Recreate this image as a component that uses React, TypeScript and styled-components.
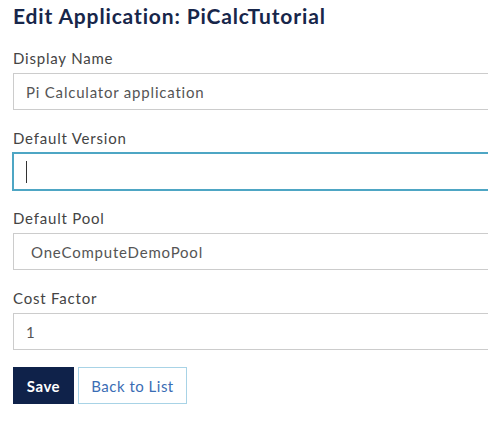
import React from 'react'
import styled, { createGlobalStyle, css } from 'styled-components'

const GlobalStyle = createGlobalStyle`
  html, body {
    margin: 0;
    padding: 0;
    background: #ffffff;
    overflow: hidden;
  }
  body {
    font-family: Lato, "Open Sans", "Liberation Sans", sans-serif;
  }
`

const Page = styled.div`
  padding: 2px 0 0 13px;
  width: 560px;
`

const Title = styled.h2`
  margin: 0 0 18px;
  font-size: 21px;
  line-height: 28px;
  font-weight: 700;
  letter-spacing: 0.85px;
  color: #17264a;
`

const Group = styled.div`
  display: flex;
  flex-direction: column;
  margin-bottom: 18px;
`

const Label = styled.label`
  font-size: 15px;
  line-height: 20px;
  letter-spacing: 0.8px;
  color: #444444;
  margin-bottom: 5px;
`

const FieldWrap = styled.div`
  position: relative;
`

const fieldBase = css<{ $focused?: boolean; $indent?: number }>`
  box-sizing: border-box;
  display: block;
  width: 100%;
  height: 37px;
  margin: 0;
  padding: 0 0 0 ${({ $indent }) => $indent ?? 12}px;
  border: 1px solid ${({ $focused }) => ($focused ? '#4ea6c4' : '#cccccc')};
  box-shadow: ${({ $focused }) => ($focused ? '0 0 0 1px #4ea6c4' : 'none')};
  border-radius: 0;
  background: #ffffff;
  font-family: inherit;
  font-size: 15px;
  letter-spacing: 0.8px;
  color: #555555;
  outline: none;
`

const TextInput = styled.input<{ $focused?: boolean; $indent?: number }>`
  ${fieldBase}
`

const Select = styled.select<{ $focused?: boolean; $indent?: number }>`
  ${fieldBase}
  appearance: none;
  -webkit-appearance: none;
`

const Caret = styled.span`
  position: absolute;
  left: 13px;
  top: 8px;
  width: 1px;
  height: 22px;
  background: #333333;
`

const Actions = styled.div`
  display: flex;
  gap: 4px;
  margin-top: -1px;
`

const Button = styled.button<{ $primary?: boolean }>`
  box-sizing: border-box;
  height: 37px;
  padding: 0;
  font-family: inherit;
  font-size: 15px;
  letter-spacing: 0.5px;
  border-radius: 0;
  cursor: pointer;
  ${({ $primary }) =>
    $primary
      ? css`
          background: #0f224a;
          border: 1px solid #0f224a;
          color: #ffffff;
          font-weight: 700;
          width: 61px;
        `
      : css`
          background: #ffffff;
          border: 1px solid #a8d3e6;
          color: #3a6db4;
          font-weight: 400;
          width: 109px;
        `}
`

export default function App() {
  return (
    <Page>
      <GlobalStyle />
      <Title>Edit Application: PiCalcTutorial</Title>

      <Group>
        <Label>Display Name</Label>
        <FieldWrap>
          <TextInput defaultValue="Pi Calculator application" />
        </FieldWrap>
      </Group>

      <Group>
        <Label>Default Version</Label>
        <FieldWrap>
          <TextInput $focused defaultValue="" />
          <Caret />
        </FieldWrap>
      </Group>

      <Group>
        <Label>Default Pool</Label>
        <FieldWrap>
          <Select $indent={17} defaultValue="OneComputeDemoPool">
            <option>OneComputeDemoPool</option>
          </Select>
        </FieldWrap>
      </Group>

      <Group>
        <Label>Cost Factor</Label>
        <FieldWrap>
          <TextInput defaultValue="1" />
        </FieldWrap>
      </Group>

      <Actions>
        <Button $primary>Save</Button>
        <Button>Back to List</Button>
      </Actions>
    </Page>
  )
}
